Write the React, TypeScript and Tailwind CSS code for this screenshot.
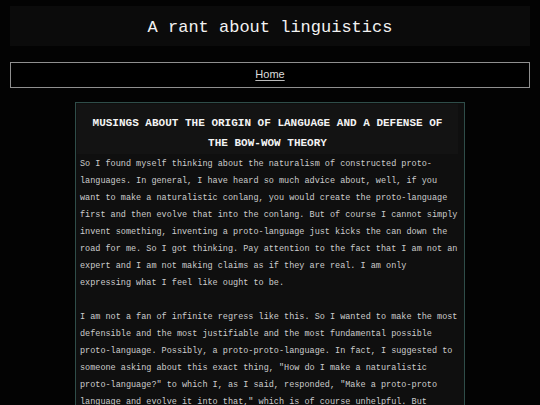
export default function App() {
  return (
    <div className="min-h-screen bg-[#030303] px-[10px] pt-[6px] pb-[20px]">
      <header className="flex h-[40px] items-center justify-center bg-[#0b0b0b] pt-[3px]">
        <h1 className="font-['Liberation_Mono',monospace] text-[17px] leading-none text-[#f2f2f2]">
          A rant about linguistics
        </h1>
      </header>

      <nav className="mt-[16px] flex h-[26px] items-center justify-center border border-[#8f8f8f] bg-black pb-[2px]">
        <a
          href="#"
          className="font-['Liberation_Sans',sans-serif] text-[11px] text-[#dcdcdc] underline decoration-[#bbbbbb] underline-offset-2"
        >
          Home
        </a>
      </nav>

      <article className="mx-auto mt-[14px] w-[390px] border border-[#2f4d49] bg-[#0f0f0f] pl-[4px] pr-[2px] pt-[1px] pb-[10px] font-['Liberation_Mono',monospace]">
        <div className="-ml-[3px] w-[381px] bg-[#131313] px-[12px] pt-[9px] pb-[1px]">
          <h2 className="text-center text-[11px] font-bold leading-[20px] text-[#f4f4f4]">
            MUSINGS ABOUT THE ORIGIN OF LANGUAGE AND A DEFENSE OF THE BOW-WOW THEORY
          </h2>
        </div>

        <div className="w-[379px] text-[8.5px] leading-[17px] text-[#cdcdcd]">
          <p className="mt-[2px]">
            So I found myself thinking about the naturalism of constructed proto-languages. In
            general, I have heard so much advice about, well, if you want to make a naturalistic
            conlang, you would create the proto-language first and then evolve that into the
            conlang. But of course I cannot simply invent something, inventing a proto-language
            just kicks the can down the road for me. So I got thinking. Pay attention to the fact
            that I am not an expert and I am not making claims as if they are real. I am only
            expressing what I feel like ought to be.
          </p>
          <p className="mt-[17px]">
            I am not a fan of infinite regress like this. So I wanted to make the most defensible
            and the most justifiable and the most fundamental possible proto-language. Possibly, a
            proto-proto-language. In fact, I suggested to someone asking about this exact thing,
            "How do I make a naturalistic proto-language?" to which I, as I said, responded, "Make
            a proto-proto language and evolve it into that," which is of course unhelpful. But
            realistically, where did the very first language come from, and is there a principled
            answer to that question at all?
          </p>
        </div>
      </article>
    </div>
  );
}
